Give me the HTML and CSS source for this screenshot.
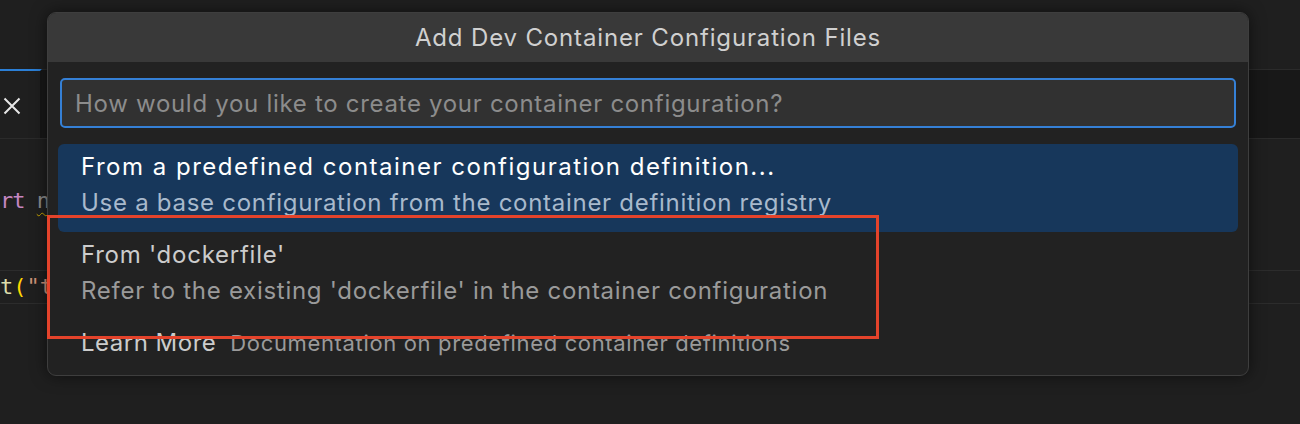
FILE: index.html
```html
<!DOCTYPE html>
<html>
<head>
<meta charset="utf-8">
<link rel="stylesheet" href="styles.css">
</head>
<body>
<div class="workbench">
  <div class="titlearea"></div>
  <div class="tabs">
    <div class="tab">
      <svg class="close" width="18" height="18" viewBox="0 0 18 18"><path d="M1.5 1.5 L16.5 16.5 M16.5 1.5 L1.5 16.5" stroke="#e6e6e6" stroke-width="2" fill="none"/></svg>
    </div>
  </div>
  <div class="editor">
    <div class="line"></div>
    <div class="line"><span class="kw">rt</span> <span class="dim">n</span></div>
    <div class="line"></div>
    <div class="line current"><span class="fn">t</span><span class="br">(</span><span class="str">"t</span></div>
  </div>
</div>

<div class="quick-input">
  <div class="qi-title">Add Dev Container Configuration Files</div>
  <div class="qi-body">
    <div class="qi-input">How would you like to create your container configuration?</div>
    <div class="qi-list">
      <div class="qi-item selected">
        <div class="label">From a predefined container configuration definition...</div>
        <div class="detail">Use a base configuration from the container definition registry</div>
      </div>
      <div class="qi-item">
        <div class="label">From 'dockerfile'</div>
        <div class="detail">Refer to the existing 'dockerfile' in the container configuration</div>
      </div>
      <div class="qi-item single">
        <span class="label">Learn More</span><span class="desc">Documentation on predefined container definitions</span>
      </div>
    </div>
  </div>
</div>

<div class="annotation"></div>
</body>
</html>
```

FILE: styles.css
```css
html, body {
  margin: 0;
  padding: 0;
}
body {
  width: 1300px;
  height: 424px;
  overflow: hidden;
  background: #1f1f1f;
  font-family: Inter, "Open Sans", sans-serif;
  position: relative;
}
.workbench {
  display: flex;
  flex-direction: column;
}
.titlearea {
  height: 69px;
  background: #1f1f1f;
  border-bottom: 1px solid #2b2b2b;
}
.tabs {
  height: 68px;
  background: #181818;
  border-bottom: 1px solid #2b2b2b;
  display: flex;
}
.tab {
  width: 42px;
  background: #1f1f1f;
  border-top: 2px solid #2b7fd6;
  border-right: 2px solid #161616;
  box-sizing: border-box;
  display: flex;
  align-items: center;
  margin-top: -1px;
  padding-left: 3px;
}
.close {
  display: block;
  margin-top: 2px;
}
.editor {
  padding-top: 8px;
  font-family: "DejaVu Sans Mono", monospace;
  font-size: 22px;
}
.line {
  height: 36px;
  line-height: 36px;
  white-space: pre;
  box-sizing: border-box;
  letter-spacing: -1px;
}
.line.current {
  border-top: 1px solid #2c2c2c;
  border-bottom: 1px solid #2c2c2c;
  height: 34px;
  line-height: 32px;
  margin-top: 15px;
  letter-spacing: 0;
}
.kw { color: #c586c0; }
.dim {
  color: #8b8b8b;
  text-decoration: underline wavy #cca700;
  text-decoration-thickness: 1px;
  text-underline-offset: 4px;
}
.fn { color: #dcdcaa; }
.br { color: #ffd700; }
.str { color: #ce9178; }

.quick-input {
  position: absolute;
  left: 47px;
  top: 12px;
  width: 1202px;
  height: 364px;
  box-sizing: border-box;
  border: 1px solid #3e3e3e;
  border-radius: 9px;
  background: #222222;
  box-shadow: 0 0 16px rgba(0,0,0,0.55);
  overflow: hidden;
  display: flex;
  flex-direction: column;
}
.qi-title {
  height: 49px;
  background: #393939;
  color: #d0d0d0;
  font-size: 24px;
  display: flex;
  align-items: center;
  justify-content: center;
  letter-spacing: 0.85px;
}
.qi-body {
  padding: 16px 10px 0 10px;
  display: flex;
  flex-direction: column;
}
.qi-input {
  margin: 0 2px;
  height: 50px;
  box-sizing: border-box;
  border: 2px solid #3580d6;
  border-radius: 5px;
  background: #313131;
  color: #8c8c8c;
  font-size: 24px;
  letter-spacing: 0.7px;
  padding-left: 13px;
  display: flex;
  align-items: center;
}
.qi-list {
  margin-top: 16px;
  display: flex;
  flex-direction: column;
}
.qi-item {
  padding: 5px 22px 11px 23px;
  border-radius: 6px;
  font-size: 24px;
  letter-spacing: 0.72px;
  line-height: 36px;
}
.qi-item.selected {
  background: #17375b;
}
.label { color: #cccccc; letter-spacing: 0.75px; }
.detail { color: #9a9a9a; }
.selected .label { color: #ffffff; letter-spacing: 1.5px; }
.selected .detail { color: #a8b9cc; }
.qi-item.single {
  display: flex;
  align-items: baseline;
  gap: 14px;
  padding-bottom: 3px;
}
.single .label {
  letter-spacing: 0.5px;
}
.desc {
  color: #9a9a9a;
  font-size: 22px;
  letter-spacing: 0.65px;
}

.annotation {
  position: absolute;
  left: 47px;
  top: 215px;
  width: 832px;
  height: 124px;
  box-sizing: border-box;
  border: 3px solid #e4432b;
}
```
